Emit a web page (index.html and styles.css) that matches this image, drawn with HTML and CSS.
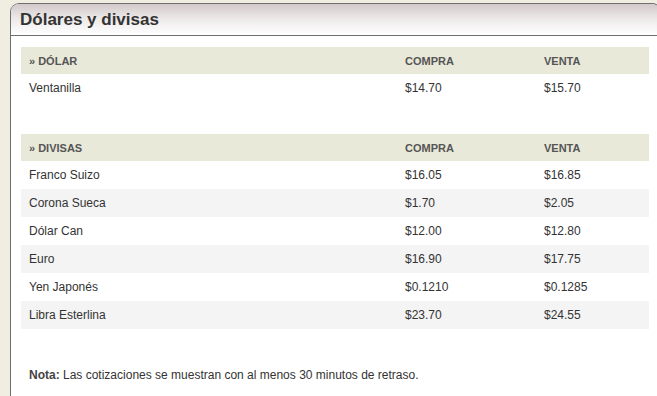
FILE: index.html
```html
<!DOCTYPE html>
<html lang="es">
<head>
<meta charset="utf-8">
<title>Dólares y divisas</title>
<link rel="stylesheet" href="styles.css">
</head>
<body>
<div class="panel">
  <div class="panel-head"><h2>Dólares y divisas</h2></div>
  <div class="panel-body">
    <table class="rates">
      <thead>
        <tr><th class="c1">» DÓLAR</th><th class="c2">COMPRA</th><th class="c3">VENTA</th></tr>
      </thead>
      <tbody>
        <tr><td>Ventanilla</td><td>$14.70</td><td>$15.70</td></tr>
      </tbody>
    </table>
    <table class="rates second">
      <thead>
        <tr><th class="c1">» DIVISAS</th><th class="c2">COMPRA</th><th class="c3">VENTA</th></tr>
      </thead>
      <tbody>
        <tr><td>Franco Suizo</td><td>$16.05</td><td>$16.85</td></tr>
        <tr class="alt"><td>Corona Sueca</td><td>$1.70</td><td>$2.05</td></tr>
        <tr><td>Dólar Can</td><td>$12.00</td><td>$12.80</td></tr>
        <tr class="alt"><td>Euro</td><td>$16.90</td><td>$17.75</td></tr>
        <tr><td>Yen Japonés</td><td>$0.1210</td><td>$0.1285</td></tr>
        <tr class="alt"><td>Libra Esterlina</td><td>$23.70</td><td>$24.55</td></tr>
      </tbody>
    </table>
    <p class="note"><strong>Nota:</strong> Las cotizaciones se muestran con al menos 30 minutos de retraso.</p>
  </div>
</div>
</body>
</html>
```
FILE: styles.css
```css
html, body {
  margin: 0;
  padding: 0;
}
body {
  background: #efeee1;
  font-family: "Liberation Sans", Arial, sans-serif;
  color: #333;
  overflow: hidden;
  height: 396px;
}
.panel {
  box-sizing: border-box;
  margin: 3px -4px 0 10px;
  border: 1px solid #6f6f6f;
  border-bottom: none;
  border-radius: 9px 9px 0 0;
  background: #fff;
  height: 393px;
}
.panel-head {
  height: 31px;
  border-bottom: 1px solid #6f6f6f;
  border-radius: 8px 8px 0 0;
  background: linear-gradient(#d2c9c9, #ece8e8 45%, #ffffff);
  padding-left: 9px;
}
.panel-head h2 {
  margin: 0;
  font-size: 17px;
  line-height: 31px;
  font-weight: bold;
  color: #333;
}
.panel-body {
  padding: 11px 0 0 10px;
}
.rates {
  width: 628px;
  border-collapse: collapse;
  font-size: 12px;
}
.rates.second {
  margin-top: 32px;
}
.rates th {
  background: #e9e9da;
  height: 27px;
  padding: 0 8px;
  text-align: left;
  font-size: 11px;
  font-weight: bold;
  color: #555;
}
.rates .c1 { width: 360px; }
.rates .c2 { width: 123px; }
.rates td {
  height: 28px;
  padding: 0 8px;
  color: #333;
}
.rates tr.alt td {
  background: #f4f4f4;
}
.note {
  margin: 39px 0 0 8px;
  font-size: 12px;
  color: #333;
}
.note strong {
  color: #444;
}
```
